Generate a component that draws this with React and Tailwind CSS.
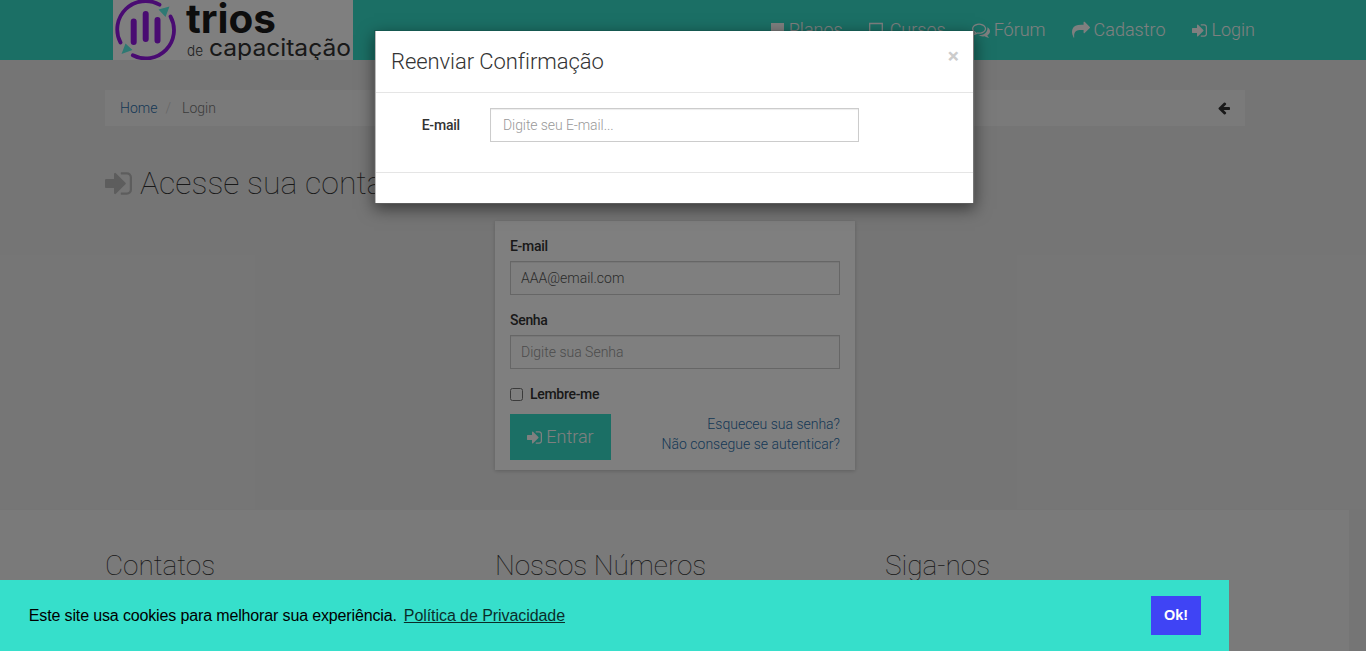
import React from "react";

const ICONS = {
  signIn:
    "M1312 896q0 26-19 45l-544 544q-19 19-45 19t-45-19-19-45v-288h-448q-26 0-45-19t-19-45v-384q0-26 19-45t45-19h448v-288q0-26 19-45t45-19 45 19l544 544q19 19 19 45zm352-352v704q0 119-84.5 203.5t-203.5 84.5h-320q-13 0-22.5-9.5t-9.5-22.5q0-4-1-20t-.5-26.5 3-23.5 10-19.5 20.5-6.5h320q66 0 113-47t47-113v-704q0-66-47-113t-113-47h-312l-11.5-1-11.5-3-8-5.5-7-9-2-13.5q0-4-1-20t-.5-26.5 3-23.5 10-19.5 20.5-6.5h320q119 0 203.5 84.5t84.5 203.5z",
  share:
    "M1792 640q0 26-19 45l-512 512q-19 19-45 19t-45-19-19-45v-256h-224q-98 0-175.5 6t-154 21.5-133 42.5-105.5 69.5-80 101-48.5 138.5-17.5 181q0 55 5 123 0 6 2.5 23.5t2.5 26.5q0 15-8.5 25t-23.5 10q-16 0-28-17-7-9-13-22t-13.5-30-10.5-24q-127-285-127-451 0-199 53-333 162-403 875-403h224v-256q0-26 19-45t45-19 45 19l512 512q19 19 19 45z",
  arrowLeft:
    "M1664 896v128q0 53-32.5 90.5t-84.5 37.5h-704l293 294q38 36 38 90t-38 90l-75 76q-37 37-90 37-52 0-91-37l-651-652q-37-37-37-90 0-52 37-91l651-650q38-38 91-38 52 0 90 38l75 74q38 38 38 91t-38 91l-293 293h704q52 0 84.5 37.5t32.5 90.5z",
  comments:
    "M704 384q-153 0-286 52t-211.5 141-78.5 191q0 82 53 158t149 132l97 56-35 84q34-20 62-39l44-31 53 10q78 14 153 14 153 0 286-52t211.5-141 78.5-191-78.5-191-211.5-141-286-52zm0-128q191 0 353.5 68.5t256.5 186.5 94 257-94 257-256.5 186.5-353.5 68.5q-86 0-176-16-124 88-278 128-36 9-86 16h-3q-11 0-20.5-8t-11.5-21q-1-3-1-6.5t.5-6.5 2-6l2.5-5 3.5-5.5 4-5 4.5-5 4-4.5q5-6 23-25t26-29.5 22.5-29 25-38.5 20.5-44q-124-72-195-177t-71-224q0-139 94-257t256.5-186.5 353.5-68.5zm822 1169q10 24 20.5 44t25 38.5 22.5 29 26 29.5 23 25q1 1 4 4.5t4.5 5 4 5 3.5 5.5l2.5 5 2 6 .5 6.5-1 6.5q-3 14-13 22t-22 7q-50-7-86-16-154-40-278-128-90 16-176 16-271 0-472-132 58 4 88 4 161 0 309-45t264-129q125-92 192-212t67-254q0-77-23-152 129 71 204 178t75 230q0 120-71 224.5t-195 176.5z",
};

function Icon({ name, className, viewBox = "0 0 1792 1792" }) {
  return (
    <svg viewBox={viewBox} className={className} fill="currentColor" aria-hidden="true">
      <path d={ICONS[name]} />
    </svg>
  );
}

function Logo() {
  return (
    <svg width="240" height="60" viewBox="0 0 240 60" className="block shrink-0 bg-white">
      <g fill="none" stroke="#9317e4" strokeLinecap="round">
        <path d="M7.500 42.500A28.300 28.300 0 0 1 46.500 4.700" strokeWidth="3.800" />
        <path d="M57.500 16.500A28.300 28.300 0 0 1 19.800 55.300" strokeWidth="3.800" />
        <path d="M20.700 21.500V42M32.700 14V39M44.500 20V40.500" strokeWidth="6" />
      </g>
      <path d="M45.500 9.500L56.500 6.500L52.500 17ZM12.500 43.500L19.500 50L8.500 54Z" fill="#5cf2e6" />
      <g fontFamily="Inter, sans-serif">
        <text x="73" y="33" fontSize="40" fontWeight="700" textLength="90" lengthAdjust="spacingAndGlyphs" fill="#1a1a1a">trios</text>
        <text x="74" y="55.500" fontSize="15" textLength="16" lengthAdjust="spacingAndGlyphs" fill="#444">de</text>
        <text x="96" y="55.500" fontSize="24" fontWeight="400" textLength="142" lengthAdjust="spacingAndGlyphs" fill="#333">capacitação</text>
      </g>
    </svg>
  );
}

function Header() {
  return (
    <header className="h-[60px] bg-[#36dfcb]">
      <div className="ml-[105px] flex h-full w-[1140px] justify-between pl-2">
        <Logo />
        <nav className="flex text-lg leading-[60px] font-light text-white">
          <a className="mr-[26px] flex items-center gap-[5px]">
            <svg viewBox="0 0 13 15" className="h-[15px] w-[13px]" fill="currentColor">
              <path d="M0 0H13V15L6.500 10L0 15Z" />
            </svg>
            Planos
          </a>
          <a className="mr-[26px] flex items-center gap-[7px]">
            <svg viewBox="0 0 14 16" className="h-4 w-[14px]" fill="none" stroke="currentColor" strokeWidth="1.300">
              <path d="M.7 1.500H13.300V15L7 10L.7 15Z" />
            </svg>
            Cursos
          </a>
          <a className="mr-[26px] flex items-center gap-[4px]">
            <Icon name="comments" className="size-[18px]" />Fórum
          </a>
          <a className="mr-[27px] flex items-center gap-[4px]">
            <Icon name="share" className="size-[18px]" />Cadastro
          </a>
          <a className="-mr-[10px] flex items-center gap-[4px]">
            <Icon name="signIn" viewBox="128 128 1536 1536" className="size-[15px]" />Login
          </a>
        </nav>
      </div>
    </header>
  );
}

function Field({ label, children }) {
  return (
    <div className="mb-[15px]">
      <div className="mb-[5px] leading-5 font-medium tracking-[-0.300px] text-[#333]">{label}</div>
      <div className="flex h-[34px] items-center border border-[#ccc] px-[10px] shadow-[inset_0_1px_1px_rgba(0,0,0,0.075)]">
        {children}
      </div>
    </div>
  );
}

function LoginCard() {
  return (
    <section className="mx-auto h-[249px] w-[360px] bg-white px-[15px] pt-[15px] shadow-[0_1px_4px_rgba(0,0,0,0.2)]">
      <Field label="E-mail"><span className="text-[#555]">AAA@email.com</span></Field>
      <Field label="Senha"><span className="text-[#999]">Digite sua Senha</span></Field>
      <label className="flex h-5 items-center gap-[7px] font-medium tracking-[-0.300px] text-[#333]">
        <span className="size-[13px] rounded-[2.500px] border border-[#767676]" />
        Lembre-me
      </label>
      <div className="mt-[10px] flex justify-between">
        <button className="flex h-[46px] w-[101px] items-center justify-center gap-1 bg-[#36dfcb] text-lg font-light text-white">
          <Icon name="signIn" viewBox="128 128 1536 1536" className="size-[15px]" />
          Entrar
        </button>
        <div className="text-right leading-5 text-[#2c70ab]">
          <div>Esqueceu sua senha?</div>
          <div className="tracking-[0.030px]">Não consegue se autenticar?</div>
        </div>
      </div>
    </section>
  );
}

function Footer() {
  return (
    <footer className="mt-10 h-[141px] bg-[#f4f4f4]">
      <div className="ml-[90px] grid w-[1170px] grid-cols-3 pt-10 text-[28px] leading-[31px] font-thin tracking-[-0.050px] text-[#333]">
        <h3 className="px-[15px]">Contatos</h3>
        <h3 className="px-[15px]">Nossos Números</h3>
        <h3 className="px-[15px]">Siga-nos</h3>
      </div>
    </footer>
  );
}

function Modal() {
  return (
    <div className="absolute top-[30px] left-[374px] h-[174px] w-[601px] border border-black/20 bg-clip-padding shadow-[0_5px_15px_rgba(0,0,0,0.5)]">
      <div className="h-full border-r border-l border-r-[#777] border-l-[#bbb] bg-white">
        <div className="flex h-[62px] justify-between border-b border-[#e5e5e5] px-[15px] pt-[15px]">
          <h4 className="text-[22px] leading-[31px] font-light tracking-[-0.070px] text-[#333]">Reenviar Confirmação</h4>
          <span className="-mr-px text-[21px] leading-[21px] font-bold text-[#ccc]">×</span>
        </div>
        <div className="flex h-20 border-b border-[#e5e5e5] pt-[15px]">
          <div className="w-[84px] text-right leading-[34px] font-medium tracking-[-0.200px] text-[#333]">E-mail</div>
          <div className="ml-[30px] flex h-[34px] w-[369px] items-center border border-[#ccc] px-3 tracking-[-0.080px] text-[#999] shadow-[inset_0_1px_1px_rgba(0,0,0,0.075)]">
            Digite seu E-mail...
          </div>
        </div>
      </div>
    </div>
  );
}

function CookieBar() {
  return (
    <div className="absolute bottom-0 left-0 flex h-[71px] w-[1229px] items-center justify-between bg-[#36dfcb] pr-7 pl-[28.800px] font-['Liberation_Sans',Arial,sans-serif] text-base font-normal tracking-[-0.140px] text-black">
      <div>
        Este site usa cookies para melhorar sua experiência.
        <a className="ml-[7px] tracking-[-0.070px] underline opacity-80">Política de Privacidade</a>
      </div>
      <button className="h-[39px] w-[50px] bg-[#3f44f5] text-[14.400px] font-bold tracking-normal text-white">Ok!</button>
    </div>
  );
}

export default function App() {
  return (
    <div className="relative h-[651px] w-[1366px] overflow-hidden bg-[#ebebeb] font-['Roboto',sans-serif] text-sm font-light text-[#333]">
      <Header />
      <div className="w-[1349px]">
        <main className="ml-[105px] w-[1140px] pt-[30px]">
          <div className="flex h-9 items-center bg-[#f5f5f5] px-[15px]">
            <span className="text-[#2c70ab]">Home</span>
            <span className="px-[8px] text-[#ccc]">/</span>
            <span className="ml-[3px] text-[#777]">Login</span>
            <Icon name="arrowLeft" className="-mr-px ml-auto size-[14px]" />
          </div>
          <h1 className="mt-[38px] mb-[17px] flex h-10 items-center gap-2 text-[32px] font-thin">
            <Icon name="signIn" viewBox="128 128 1536 1536" className="-mt-0.5 size-[27px] text-[#bbb]" />
            Acesse sua conta
          </h1>
          <LoginCard />
        </main>
        <Footer />
      </div>
      <div className="absolute inset-0 bg-black/50" />
      <Modal />
      <CookieBar />
    </div>
  );
}
